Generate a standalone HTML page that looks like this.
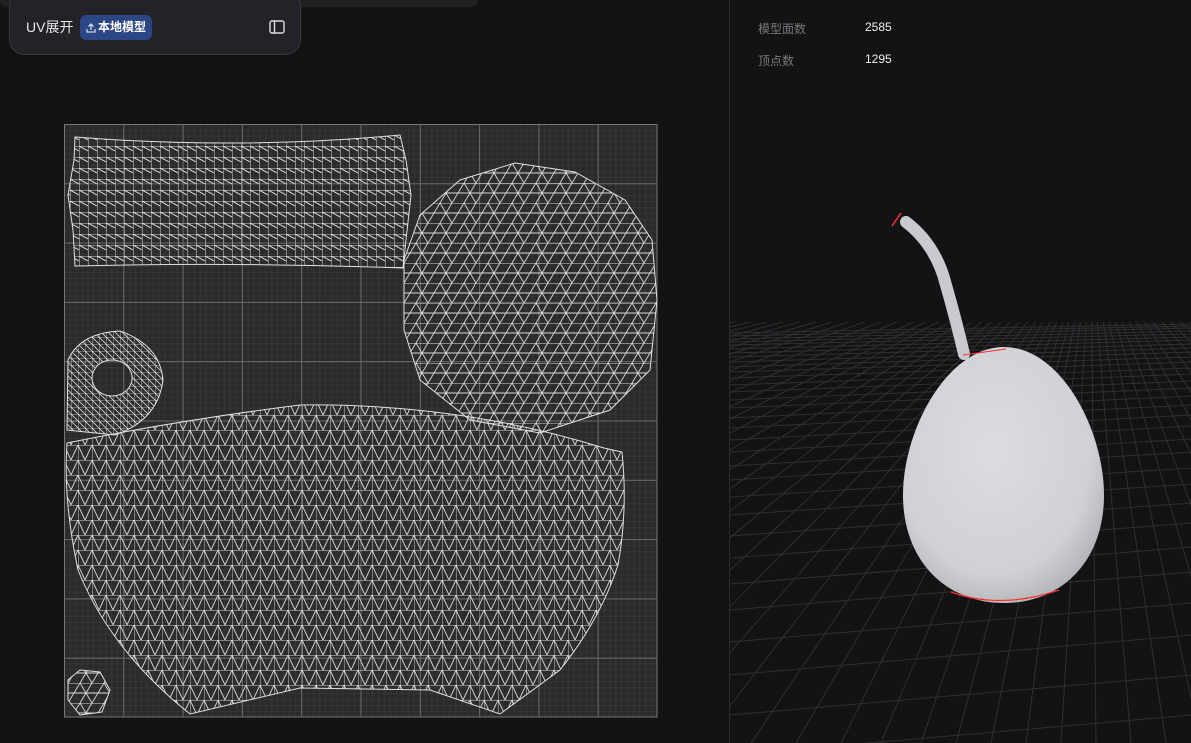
<!DOCTYPE html>
<html><head><meta charset="utf-8"><style>
*{margin:0;padding:0;box-sizing:border-box}
body{width:1191px;height:743px;background:#131313;overflow:hidden;position:relative;font-family:"Liberation Sans","Noto Sans CJK SC",sans-serif}
.topstrip{position:absolute;left:0;top:0;width:478px;height:7px;background:#1f2021;border-radius:0 0 8px 8px}
.card{position:absolute;left:9px;top:-10px;width:292px;height:65px;background:#222228;border:1px solid #38383e;border-radius:16px}
.title{position:absolute;left:26px;top:17px;color:#e8e8ea;font-size:14px}
.btn{position:absolute;left:80px;top:15px;width:72px;height:25px;background:#2c4683;border-radius:6px;color:#fff;font-size:12px;font-weight:bold;line-height:25px;padding-left:18px}
.right{position:absolute;left:729px;top:0;width:462px;height:743px;background:#131316;border-left:1px solid #2a2a2d}
.lab{position:absolute;color:#7a7a7c;font-size:12px}
.val{position:absolute;color:#f0f0f0;font-size:12px}
</style></head><body>
<svg width="729" height="743" style="position:absolute;left:0;top:0">
<defs>
<pattern id="minor" x="64" y="124" width="5.93" height="5.93" patternUnits="userSpaceOnUse"><rect width="5.93" height="5.93" fill="#2b2b2b"/><path d="M0 0H5.93M0 0V5.93" stroke="#3b3b3b" stroke-width="1"/></pattern>
<pattern id="major" x="64" y="124" width="59.3" height="59.3" patternUnits="userSpaceOnUse"><path d="M0 0.5H59.3M0.5 0V59.3" stroke="#6a6a6a" stroke-width="1"/></pattern>
<pattern id="m1" x="70" y="135" width="9" height="11" patternUnits="userSpaceOnUse"><path d="M0 0H9M0 0V11M0 0L9 5" stroke="#d8d8d8" stroke-width="1" fill="none"/></pattern>
<pattern id="m2" x="404" y="163" width="24" height="20" patternUnits="userSpaceOnUse"><path d="M0 0H24M0 20L12 0L24 20M-12 20L0 0M12 20L24 0M0 10H24" stroke="#d8d8d8" stroke-width="0.9" fill="none"/></pattern>
<pattern id="m3" x="64" y="400" width="14" height="15" patternUnits="userSpaceOnUse"><path d="M0 0H14M0 0V15M0 0L7 15L14 0" stroke="#d8d8d8" stroke-width="0.9" fill="none"/></pattern>
<pattern id="m4" x="64" y="330" width="7" height="7" patternUnits="userSpaceOnUse"><path d="M0 0H7M0 0V7M0 0L7 7" stroke="#d8d8d8" stroke-width="0.8" fill="none"/></pattern>
</defs>
<rect x="64" y="124" width="593" height="593" fill="url(#minor)"/>
<rect x="64" y="124" width="593" height="593" fill="url(#major)"/>
<rect x="64.5" y="124.5" width="592.5" height="592.5" fill="none" stroke="#777"/>
<path d="M75 137 Q240 150 400 135 L406 160 L411 195 L406 240 L403 268 Q240 262 75 266 L73 230 L68 195 L74 160Z" fill="url(#m1)" stroke="#e0e0e0"/>
<path d="M515 163 L575 172 L625 200 L652 240 L657 300 L650 370 L610 410 L540 433 L470 420 L420 380 L404 330 L404 260 L420 215 L460 180Z" fill="url(#m2)" stroke="#e0e0e0"/>
<path d="M67 430 L68 360 Q80 333 120 331 Q160 345 163 380 Q158 420 115 435 Z M112 360 A20 18 0 1 0 112.1 360Z" fill="url(#m4)" fill-rule="evenodd" stroke="#e0e0e0"/>
<path d="M67 443 Q180 420 300 405 Q460 403 604 448 L622 452 Q628 510 618 565 Q600 620 560 670 L500 714 L430 690 L300 688 L190 714 Q110 650 78 570 Q63 500 67 443Z" fill="url(#m3)" stroke="#e0e0e0"/>
<path d="M80 670 L100 672 L110 690 L102 712 L80 715 L68 700 L68 680Z" fill="url(#m2)" stroke="#e0e0e0"/>
</svg>
<div class="topstrip"></div>
<div class="card"></div>
<div class="title">UV展开</div>
<div class="btn"><svg width="10" height="10" style="position:absolute;left:6px;top:8px" viewBox="0 0 10 10"><path d="M5 7V1M2.5 3.5L5 1L7.5 3.5M1 6V9H9V6" stroke="#cfd8ee" stroke-width="1.3" fill="none"/></svg>本地模型</div>
<svg width="16" height="14" style="position:absolute;left:269px;top:20px" viewBox="0 0 16 14"><rect x="1" y="1" width="14" height="12" rx="2" stroke="#ddd" stroke-width="1.4" fill="none"/><path d="M5.5 1V13" stroke="#ddd" stroke-width="1.4"/></svg>
<div class="right">
<svg width="462" height="743" style="position:absolute;left:0;top:0" viewBox="729 0 462 743">
<defs><clipPath id="fl"><rect x="729" y="322" width="462" height="421"/></clipPath>
<radialGradient id="eg" cx="0.45" cy="0.4" r="0.65"><stop offset="0" stop-color="#dcdde0"/><stop offset="0.75" stop-color="#d0d1d4"/><stop offset="1" stop-color="#b0b1b4"/></radialGradient></defs>
<g clip-path="url(#fl)" stroke="#303033" stroke-width="1" fill="none">
<path d="M1090 240L-1400 743M1090 240L-1300 743M1090 240L-1200 743M1090 240L-1100 743M1090 240L-1000 743M1090 240L-900 743M1090 240L-800 743M1090 240L-700 743M1090 240L-600 743M1090 240L-500 743M1090 240L-400 743M1090 240L-300 743M1090 240L-200 743M1090 240L-100 743M1090 240L0 743M1090 240L75 743M1090 240L150 743M1090 240L225 743M1090 240L300 743M1090 240L360 743M1090 240L420 743M1090 240L480 743M1090 240L540 743M1090 240L595 743M1090 240L650 743M1090 240L700 743M1090 240L750 743M1090 240L795 743M1090 240L840 743M1090 240L880 743M1090 240L920 743M1090 240L955 743M1090 240L990 743M1090 240L1025 743M1090 240L1060 743M1090 240L1095 743M1090 240L1130 743M1090 240L1165 743M1090 240L1200 743M1090 240L1240 743M1090 240L1280 743M1090 240L1325 743M1090 240L1370 743M1090 240L1420 743M1090 240L1470 743M1090 240L1525 743M1090 240L1580 743M1090 240L1640 743M1090 240L1700 743M1090 240L1775 743M1090 240L1850 743M1090 240L1950 743M1090 240L2050 743"/>
<path d="M729 333L1191 324M729 336L1191 326M729 339L1191 328M729 342L1191 331M729 345L1191 334M729 349L1191 337M729 353L1191 340M729 357L1191 344M729 362L1191 348M729 367L1191 352M729 372L1191 357M729 378L1191 362M729 385L1191 368M729 392L1191 374M729 400L1191 381M729 408L1191 388M729 418L1191 396M729 428L1191 405M729 440L1191 415M729 452L1191 426M729 466L1191 439M729 480L1191 452M729 497L1191 468M729 515L1191 484M729 536L1191 503M729 558L1191 523M729 584L1191 547M729 610L1191 572M729 642L1191 603M729 675L1191 635M729 715L1191 675M729 755L1191 715"/>
</g>
<path d="M963 354 Q955 320 945 285 Q935 245 905 222" stroke="#c9cacd" stroke-width="12" fill="none" stroke-linecap="round"/>
<path d="M1003 347 C1060 347 1103 430 1103 495 C1103 562 1060 603 1003 603 C946 603 902 562 902 495 C902 430 946 347 1003 347Z" fill="url(#eg)"/>
<path d="M950 592 Q1000 610 1058 590" stroke="#ff3030" stroke-width="1.2" fill="none"/>
<path d="M962 355 L1005 349" stroke="#ff3030" stroke-width="1" fill="none"/>
<path d="M891 226 L900 213" stroke="#ff3030" stroke-width="1.5"/>
</svg>
<div class="lab" style="left:28px;top:20px">模型面数</div><div class="val" style="left:135px;top:20px">2585</div>
<div class="lab" style="left:28px;top:52px">顶点数</div><div class="val" style="left:135px;top:52px">1295</div>
</div>
</body></html>
